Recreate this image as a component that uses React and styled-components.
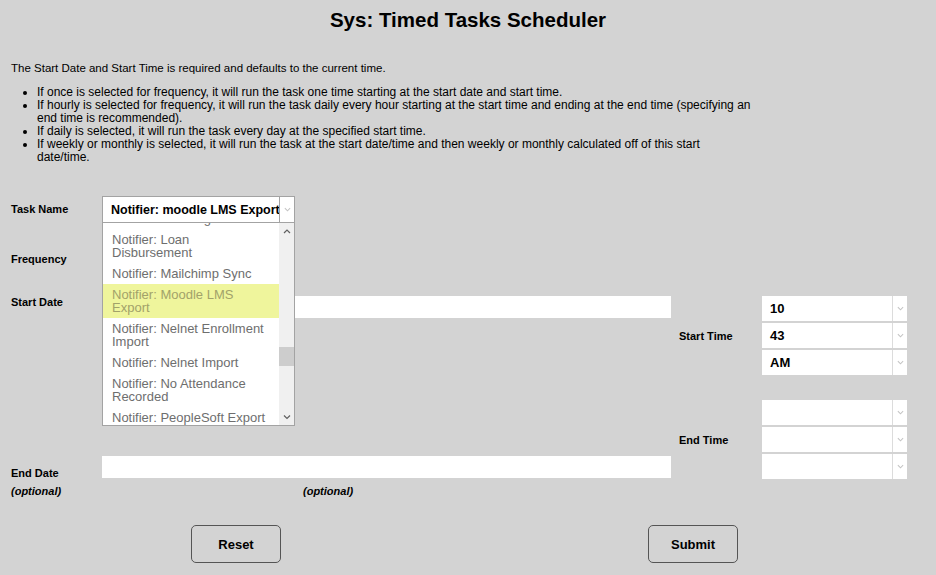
import React from 'react';
import styled, { createGlobalStyle } from 'styled-components';

const GlobalStyle = createGlobalStyle`
  body {
    margin: 0;
    background-color: #d3d3d3;
    font-family: "Liberation Sans", Arial, sans-serif;
    color: #000;
  }
`;

const Page = styled.div`
  width: 936px;
  height: 575px;
  padding: 0 11px;
  box-sizing: border-box;
  position: relative;
`;

const Title = styled.h1`
  margin: 0;
  padding-top: 8px;
  font-size: 20.5px;
  line-height: 24px;
  font-weight: bold;
  text-align: center;
`;

const Intro = styled.p`
  margin: 30px 0 0;
  font-size: 11.5px;
  line-height: 13px;
`;

const Notes = styled.ul`
  margin: 11px 0 0;
  padding-left: 26px;
  width: 760px;
  font-size: 12px;
  line-height: 13px;
`;

const Form = styled.div`
  margin-top: 32px;
  display: flex;
  flex-direction: column;
`;

const Row = styled.div`
  display: flex;
  align-items: ${({ $align }) => $align || 'center'};
  height: ${({ $h }) => ($h ? `${$h}px` : 'auto')};
  margin-top: ${({ $mt }) => $mt || 0}px;
`;

const Label = styled.div`
  width: 91px;
  flex-shrink: 0;
  font-size: 11px;
  font-weight: bold;
  line-height: 13px;
  margin-bottom: ${({ $drop }) => ($drop ? '-2px' : '0')};
`;

const Optional = styled.div`
  width: ${({ $w }) => ($w ? `${$w}px` : 'auto')};
  font-size: 11px;
  font-style: italic;
  font-weight: bold;
  line-height: 13px;
  margin-top: 6px;
`;

const SelectWrap = styled.div`
  position: relative;
`;

const SelectBox = styled.div`
  width: ${({ $w }) => $w}px;
  height: ${({ $h }) => $h}px;
  box-sizing: border-box;
  background: #fff;
  border: ${({ $bordered }) => ($bordered ? '1px solid #a3a3a3' : 'none')};
  display: flex;
  align-items: stretch;
  font-size: ${({ $bordered }) => ($bordered ? '12.5px' : '13px')};
  font-weight: bold;
`;

const SelectValue = styled.div`
  flex: 1;
  display: flex;
  align-items: center;
  padding-left: 8px;
  white-space: nowrap;
  overflow: hidden;
`;

const Arrow = styled.div`
  width: 14px;
  flex-shrink: 0;
  border-left: 1px solid ${({ $dark }) => ($dark ? '#a3a3a3' : '#dcdcdc')};
  display: flex;
  align-items: center;
  justify-content: center;
  & svg {
    width: 7px;
    height: 5px;
  }
`;

const Chevron = ({ up, color = '#c4c4c4' }) => (
  <svg viewBox='0 0 8 5'>
    <path
      d={up ? 'M1 4.5 L4 1.5 L7 4.5' : 'M1 1 L4 4 L7 1'}
      fill='none'
      stroke={color}
      strokeWidth='1.2'
    />
  </svg>
);

const Select = ({ value, w, h, bordered }) => (
  <SelectBox $w={w} $h={h} $bordered={bordered}>
    <SelectValue>{value}</SelectValue>
    <Arrow $dark={bordered}>
      <Chevron />
    </Arrow>
  </SelectBox>
);

const Menu = styled.div`
  position: absolute;
  top: 27px;
  left: 0;
  width: 193px;
  height: 203px;
  box-sizing: border-box;
  background: #fff;
  border: 1px solid #a3a3a3;
  border-top: none;
  display: flex;
  overflow: hidden;
  z-index: 5;
`;

const MenuList = styled.div`
  flex: 1;
  margin-top: -15px;
`;

const MenuItem = styled.div`
  padding: 4px 0 4px 9px;
  font-size: 13px;
  line-height: 13px;
  color: ${({ $active }) => ($active ? '#a2a26a' : '#6e6e6e')};
  background: ${({ $active }) => ($active ? '#eff59c' : 'transparent')};
  white-space: nowrap;
`;

const Scrollbar = styled.div`
  width: 15px;
  flex-shrink: 0;
  background: #f0f0f0;
  display: flex;
  flex-direction: column;
  align-items: center;
  padding: 5px 0 5px;
  box-sizing: border-box;
  & svg {
    width: 8px;
    height: 6px;
  }
`;

const Thumb = styled.div`
  width: 15px;
  height: 19px;
  background: #cdcdcd;
  margin: 113px 0 auto;
`;

const options = [
  ['Notifier: Learning'],
  ['Notifier: Loan', 'Disbursement'],
  ['Notifier: Mailchimp Sync'],
  ['Notifier: Moodle LMS', 'Export'],
  ['Notifier: Nelnet Enrollment', 'Import'],
  ['Notifier: Nelnet Import'],
  ['Notifier: No Attendance', 'Recorded'],
  ['Notifier: PeopleSoft Export'],
];

const Dates = styled.div`
  display: flex;
  margin-top: 26px;
`;

const DateColumn = styled.div`
  display: flex;
  flex-direction: column;
  justify-content: space-between;
  height: 182px;
`;

const DateInput = styled.div`
  width: 569px;
  height: 22px;
  background: #fff;
`;

const TimeColumn = styled.div`
  margin-left: 8px;
  display: flex;
  flex-direction: column;
  gap: 25px;
`;

const TimeGroup = styled.div`
  display: flex;
  align-items: center;
`;

const TimeLabel = styled.div`
  width: 83px;
  font-size: 11px;
  font-weight: bold;
`;

const TimeSelects = styled.div`
  display: flex;
  flex-direction: column;
  gap: 2px;
`;

const Buttons = styled.div`
  display: flex;
  margin-top: 27px;
  padding-left: 180px;
  gap: 367px;
`;

const Button = styled.button`
  width: 90px;
  height: 38px;
  border: 1px solid #555;
  border-radius: 5px;
  background: transparent;
  font-family: inherit;
  font-size: 13px;
  font-weight: bold;
  color: #000;
`;

const App = () => {
  return (
    <Page>
      <GlobalStyle />
      <Title>Sys: Timed Tasks Scheduler</Title>
      <Intro>The Start Date and Start Time is required and defaults to the current time.</Intro>
      <Notes>
        <li>If once is selected for frequency, it will run the task one time starting at the start date and start time.</li>
        <li>
          If hourly is selected for frequency, it will run the task daily every hour starting at the start time and ending at the end time (specifying an
          <br />
          end time is recommended).
        </li>
        <li>If daily is selected, it will run the task every day at the specified start time.</li>
        <li>
          If weekly or monthly is selected, it will run the task at the start date/time and then weekly or monthly calculated off of this start
          <br />
          date/time.
        </li>
      </Notes>
      <Form>
        <Row $h={27}>
          <Label>Task Name</Label>
          <SelectWrap>
            <Select value='Notifier: moodle LMS Export' w={193} h={27} bordered />
            <Menu>
              <MenuList>
                {options.map((lines, i) => (
                  <MenuItem key={i} $active={i === 3}>
                    {lines.map((l, j) => (
                      <div key={j}>{l}</div>
                    ))}
                  </MenuItem>
                ))}
              </MenuList>
              <Scrollbar>
                <Chevron up color='#606060' />
                <Thumb />
                <Chevron color='#606060' />
              </Scrollbar>
            </Menu>
          </SelectWrap>
        </Row>
        <Row $h={22} $mt={25}>
          <Label>Frequency</Label>
        </Row>
        <Dates>
          <DateColumn>
            <Row $align='flex-start'>
              <Label>Start Date</Label>
              <DateInput />
            </Row>
            <Row $align='flex-end'>
              <Label $drop>End Date</Label>
              <DateInput />
            </Row>
          </DateColumn>
          <TimeColumn>
            <TimeGroup>
              <TimeLabel>Start Time</TimeLabel>
              <TimeSelects>
                <Select value='10' w={145} h={25} />
                <Select value='43' w={145} h={25} />
                <Select value='AM' w={145} h={25} />
              </TimeSelects>
            </TimeGroup>
            <TimeGroup>
              <TimeLabel>End Time</TimeLabel>
              <TimeSelects>
                <Select value='' w={145} h={25} />
                <Select value='' w={145} h={25} />
                <Select value='' w={145} h={25} />
              </TimeSelects>
            </TimeGroup>
          </TimeColumn>
        </Dates>
        <Row>
          <Optional $w={292}>(optional)</Optional>
          <Optional>(optional)</Optional>
        </Row>
        <Buttons>
          <Button>Reset</Button>
          <Button>Submit</Button>
        </Buttons>
      </Form>
    </Page>
  );
};

export default App;
